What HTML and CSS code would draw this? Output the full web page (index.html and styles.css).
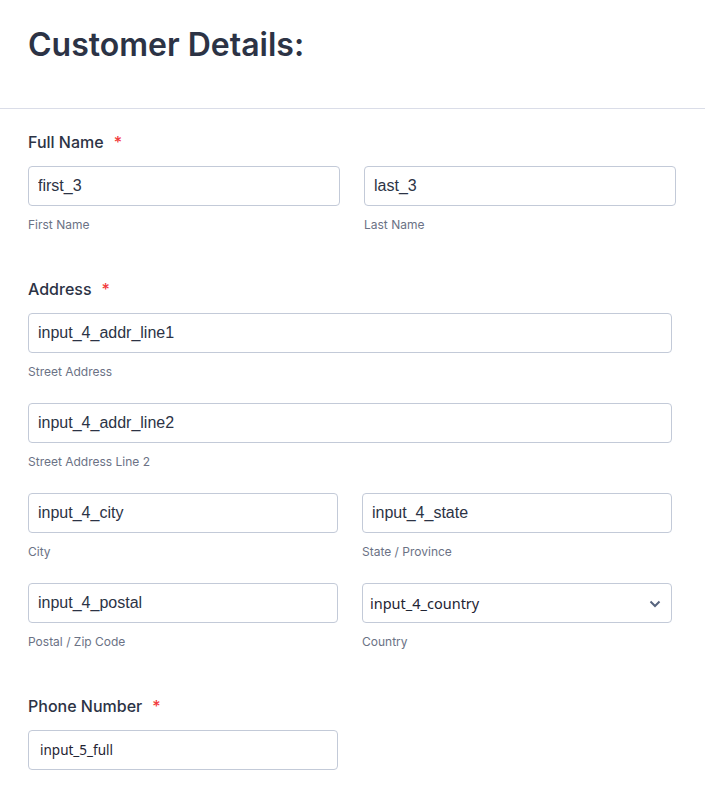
FILE: index.html
```html
<!DOCTYPE html>
<html lang="en">
<head>
    <meta charset="UTF-8">
    <title>Customer Details</title>
    <link rel="stylesheet" href="styles.css">
</head>
<body>
<div class="header">
    <h1>Customer Details:</h1>
</div>

<form class="form">
    <div class="field">
        <label class="label">Full Name<span class="req">*</span></label>
        <div class="row row-name">
            <div class="cell">
                <input class="input" type="text" value="first_3">
                <span class="sublabel">First Name</span>
            </div>
            <div class="cell">
                <input class="input" type="text" value="last_3">
                <span class="sublabel">Last Name</span>
            </div>
        </div>
    </div>

    <div class="field">
        <label class="label">Address<span class="req">*</span></label>
        <div class="row row-address">
            <div class="cell wide">
                <input class="input" type="text" value="input_4_addr_line1">
                <span class="sublabel">Street Address</span>
            </div>
            <div class="cell wide">
                <input class="input" type="text" value="input_4_addr_line2">
                <span class="sublabel">Street Address Line 2</span>
            </div>
            <div class="cell">
                <input class="input" type="text" value="input_4_city">
                <span class="sublabel">City</span>
            </div>
            <div class="cell">
                <input class="input" type="text" value="input_4_state">
                <span class="sublabel">State / Province</span>
            </div>
            <div class="cell">
                <input class="input" type="text" value="input_4_postal">
                <span class="sublabel">Postal / Zip Code</span>
            </div>
            <div class="cell">
                <div class="select-wrap">
                    <select class="input select">
                        <option>input_4_country</option>
                    </select>
                    <svg class="chevron" width="12" height="8" viewBox="0 0 12 8">
                        <path d="M1.5 1.5 L6 6 L10.5 1.5" fill="none" stroke="#57647e" stroke-width="2"/>
                    </svg>
                </div>
                <span class="sublabel">Country</span>
            </div>
        </div>
    </div>

    <div class="field">
        <label class="label">Phone Number<span class="req">*</span></label>
        <input class="input phone" type="tel" value="input_5_full">
    </div>
</form>
</body>
</html>
```

FILE: styles.css
```css
body {
    margin: 0;
    background-color: #ffffff;
    font-family: "Inter", "Liberation Sans", sans-serif;
    color: #2c3345;
}

.header {
    padding: 25px 28px 43px 28px;
    border-bottom: 1px solid #dadde8;
}

h1 {
    margin: 0;
    font-size: 32px;
    line-height: 40px;
    font-weight: 600;
    color: #2c3345;
}

.form {
    padding: 23px 28px 0 28px;
}

.field {
    margin-bottom: 46px;
}

.label {
    display: block;
    font-size: 16px;
    line-height: 20px;
    font-weight: 500;
    margin-bottom: 14px;
}

.req {
    color: #f23a3c;
    margin-left: 10px;
}

.row {
    display: grid;
    grid-template-columns: 1fr 1fr;
    column-gap: 24px;
    row-gap: 23px;
}

.row-name {
    width: 648px;
}

.row-address {
    width: 644px;
}

.cell {
    display: flex;
    flex-direction: column;
}

.wide {
    grid-column: 1 / 3;
}

.input {
    box-sizing: border-box;
    width: 100%;
    height: 40px;
    margin: 0;
    padding: 0 9px;
    border: 1px solid #c3cad8;
    border-radius: 4px;
    background-color: #ffffff;
    font-family: "Liberation Sans", Arial, sans-serif;
    font-size: 16px;
    color: #2c3345;
    outline: none;
}

.sublabel {
    display: block;
    margin-top: 11px;
    font-size: 12px;
    line-height: 16px;
    color: #6b7285;
}

.select-wrap {
    position: relative;
}

.select {
    appearance: none;
    -webkit-appearance: none;
    padding-left: 7px;
    font-family: "Noto Sans", sans-serif;
    font-size: 14.5px;
    color: #1f2433;
}

.chevron {
    position: absolute;
    right: 11px;
    top: 17px;
}

.phone {
    width: 310px;
    padding-left: 11px;
    font-family: "Noto Sans", sans-serif;
    font-size: 13.5px;
    color: #1f2433;
}
```
